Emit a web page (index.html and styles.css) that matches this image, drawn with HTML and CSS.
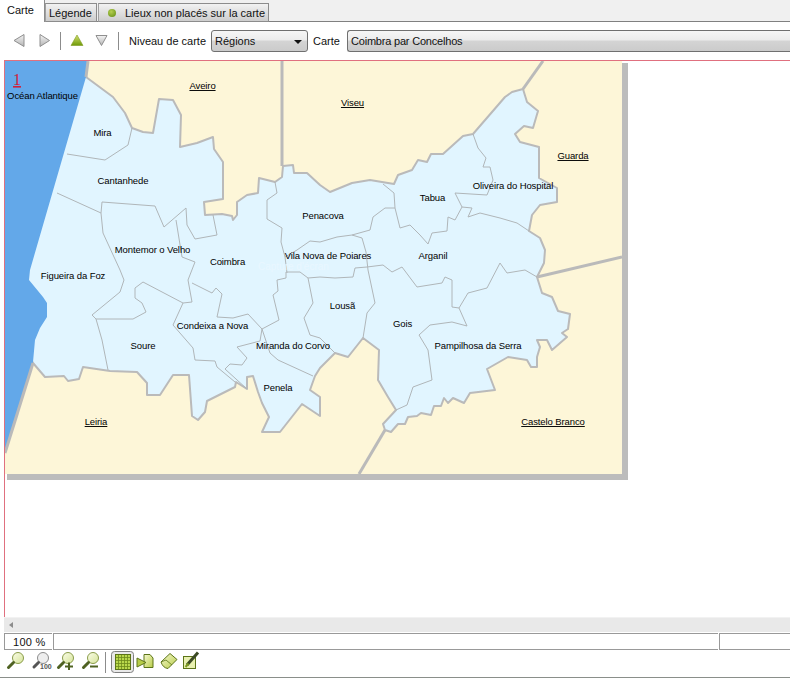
FILE: index.html
```html
<!DOCTYPE html>
<html lang="fr">
<head>
<meta charset="utf-8">
<title>Carte</title>
<link rel="stylesheet" href="styles.css">
</head>
<body>
<div class="app">
  <div class="tabs">
    <div class="tab tab-active">Carte</div>
    <div class="tab tab-legend">Légende</div>
    <div class="tab tab-places"><span class="dot"></span>Lieux non placés sur la carte</div>
  </div>

  <div class="toolbar">
    <svg class="nav-icons" width="106" height="18" viewBox="0 0 106 18">
      <defs>
        <linearGradient id="g-grey" x1="0" y1="0" x2="0" y2="1"><stop offset="0" stop-color="#f4f4f4"/><stop offset="1" stop-color="#b4b4b4"/></linearGradient>
        <linearGradient id="g-green" x1="0" y1="0" x2="0" y2="1"><stop offset="0" stop-color="#d4e070"/><stop offset="1" stop-color="#6f9a08"/></linearGradient>
      </defs>
      <path d="M11 2.500V14.500L1 8.500Z" fill="url(#g-grey)" stroke="#8f8f8f"/>
      <path d="M27 2.500V14.500L36.500 8.500Z" fill="url(#g-grey)" stroke="#8f8f8f"/>
      <path d="M64 3L70 13.500H58Z" fill="url(#g-green)" stroke="#7d9a20" stroke-width=".6"/>
      <path d="M83 3.500H94L88.500 13.500Z" fill="url(#g-grey)" stroke="#8f8f8f"/>
    </svg>
    <span class="sep sep-a"></span>
    <span class="sep sep-b"></span>
    <span class="tool-label">Niveau de carte</span>
    <div class="select select-level"><span>Régions</span><i class="caret"></i></div>
    <span class="tool-label tool-label-map">Carte</span>
    <div class="select select-map"><span>Coimbra par Concelhos</span></div>
  </div>

  <main class="canvas">
    <div class="map">
      <svg width="617" height="413" viewBox="5 61 617 413" role="img" aria-label="Coimbra par Concelhos">
        <rect x="5" y="61" width="617" height="413" fill="#fdf6d8"/>
        <path class="land" d="M86 77L113 97L125 113L132 128L143 132L153 133L159 99L173 100L181 115L180 147L197 143L213 137L214 149L223 162L223 199L204 202L205 215L222 214L232 216L233 220L237 215L237 202L247 195L258 193L259 178L275 182L282 177L283 166L293 165L294 173L307 173L320 185L330 192L352 183L370 180L394 184L398 175L412 170L418 160L427 162L431 154L443 154L463 136L473 134L505 97L512 92L523 89L527 102L538 111L533 128L524 126L515 134L520 142L539 147L539 178L557 188L557 202L540 205L532 215L529 231L540 238L545 250L544 263L537 277L542 293L552 297L558 311L570 314L568 329L562 333L567 337L552 350L547 340L537 340L540 347L537 357L537 367L531 367L527 360L508 357L487 369L495 390L470 393L464 403L453 398L448 403L444 398L441 406L434 406L431 415L421 413L417 416L408 417L405 424L398 424L391 432L385 430L383 424L396 410L388 397L378 380L379 350L363 338L348 357L335 353L320 368L315 376L310 390L320 397L320 416L302 404L280 432L262 432L269 417L262 403L258 392L253 376L247 377L247 389L236 382L235 387L207 401L205 412L198 420L192 416L189 375L173 375L160 395L147 395L147 383L137 372L110 371L83 367L79 379L68 381L64 376L45 377L33 363L20 340L20 270L70 70Z"/>
        <path class="ocean" d="M5 61H88L86 77L30 270L29 280L43 297L47 303L47 317L40 328L35 340L33 362L5 453Z"/>
        <g class="inner">
          <path d="M132 128L128 145L105 160L67 154"/>
          <path d="M57 193L101 213L102 202L155 206L164 227L186 208L187 225L195 239L217 235L213 215"/>
          <path d="M176 220L182 257L195 262L188 280L192 302L183 303"/>
          <path d="M101 213L103 233L120 270L124 280L120 292L92 315L96 319L133 319L146 312L142 303L135 298L135 288L143 282L183 303L173 325L193 348L195 360L215 361L217 367L235 382"/>
          <path d="M96 319L102 340L108 370"/>
          <path d="M192 283L212 293L216 288L222 294L217 317L233 318L248 314L262 329L260 341L237 347L247 358L242 365L230 364L225 369L247 389"/>
          <path d="M262 329L270 353L278 360L313 376"/>
          <path d="M262 329L279 320L273 295L278 291L277 280L286 278L286 272L300 272L308 278L313 303L304 318L310 335L320 338L335 353"/>
          <path d="M275 182L277 193L267 200L267 219L282 228L281 242L285 257L287 273"/>
          <path d="M285 257L297 250L310 241L320 242L337 237L352 235L362 238L366 252L368 270L375 303L367 313L363 338"/>
          <path d="M352 235L370 230L373 217L385 208L395 208L394 193L383 184"/>
          <path d="M395 208L400 228L410 225L420 235L428 244L432 233L447 231L448 217L455 220L462 207L455 193L487 195L493 180L490 167L483 167L486 158L478 148L473 134"/>
          <path d="M462 207L472 208L468 217L480 213L500 218L517 223L529 231"/>
          <path d="M367 267L383 265L392 272L402 267L417 287L442 283L445 277L452 280L452 307L459 308L467 326L452 322L430 325L419 335L428 350L432 380L413 387L407 405L396 410"/>
          <path d="M459 308L468 293L487 288L500 263L507 273L525 270L537 277"/>
          <path d="M308 278L320 277L335 278L353 277L355 268L367 267"/>
        </g>
        <g class="border">
          <path d="M282 61V166"/>
          <path d="M543 61L523 89"/>
          <path d="M537 277L622 257"/>
          <path d="M385 430L359 474"/>
          <path d="M33 363L5 453"/>
          <path d="M88 61L86 77"/>
        </g>
        <text class="ref" x="13" y="85">1</text>
        <text class="watermark" x="258" y="270">Capture d'écran</text>
        <g class="names">
          <text x="42.500" y="99">Océan Atlantique</text>
          <text x="102.500" y="136">Mira</text>
          <text x="123" y="184">Cantanhede</text>
          <text x="323" y="219">Penacova</text>
          <text x="432.500" y="201">Tabua</text>
          <text x="513" y="189">Oliveira do Hospital</text>
          <text x="152.500" y="253">Montemor o Velho</text>
          <text x="227.500" y="265">Coimbra</text>
          <text x="328" y="259">Vila Nova de Poiares</text>
          <text x="433" y="259">Arganil</text>
          <text x="73" y="279">Figueira da Foz</text>
          <text x="212.500" y="329">Condeixa a Nova</text>
          <text x="143" y="349">Soure</text>
          <text x="293" y="349">Miranda do Corvo</text>
          <text x="342.500" y="309">Lousã</text>
          <text x="402.500" y="327">Gois</text>
          <text x="478" y="349">Pampilhosa da Serra</text>
          <text x="278" y="391">Penela</text>
        </g>
        <g class="names neighbours">
          <text x="202.500" y="89">Aveiro</text>
          <text x="352.500" y="106">Viseu</text>
          <text x="573" y="159">Guarda</text>
          <text x="96" y="425">Leiria</text>
          <text x="553" y="425">Castelo Branco</text>
        </g>
      </svg>
    </div>
  </main>

  <div class="scrollbar"><i class="scroll-arrow"></i></div>

  <div class="status">
    <div class="cell cell-zoom">100 %</div>
    <div class="cell cell-wide"></div>
    <div class="cell cell-end"></div>
  </div>

  <div class="bottombar">
    <svg class="bottom-icons" width="200" height="27" viewBox="0 650 200 27">
      <defs>
        <linearGradient id="g-lens" x1="0" y1="0" x2="1" y2="1"><stop offset="0" stop-color="#fbfde8"/><stop offset="1" stop-color="#d6e49a"/></linearGradient>
        <linearGradient id="g-leaf" x1="0" y1="0" x2="1" y2="1"><stop offset="0" stop-color="#f6f9d0"/><stop offset="1" stop-color="#b8cc48"/></linearGradient>
      </defs>
      <g class="lens">
        <circle cx="18" cy="658" r="5.500"/><path d="M13.500 662.500L8.500 667.500"/>
      </g>
      <g class="lens lens-grey">
        <circle cx="43" cy="658" r="5.500"/><path d="M38.500 662.500L34 667"/>
      </g>
      <text class="tiny" x="40" y="669">100</text>
      <g class="lens">
        <circle cx="68" cy="658" r="5.500"/><path d="M63.500 662.500L58.500 667.500"/>
        <path class="sign" d="M65 666.500H73M69 662.500V670"/>
      </g>
      <g class="lens">
        <circle cx="93" cy="658" r="5.500"/><path d="M88.500 662.500L83.500 667.500"/>
        <path class="sign" d="M90 666.500H98"/>
      </g>
      <path d="M105.500 652V673" stroke="#8c8c8c"/>
      <rect x="111.500" y="651.500" width="22" height="21" rx="3" fill="#e9e9e9" stroke="#808080"/>
      <rect x="115.500" y="654.500" width="15" height="15" fill="#b9d84c" stroke="#5c7418"/>
      <path d="M118.500 655V669M121.500 655V669M124.500 655V669M127.500 655V669M116 657.500H130M116 660.500H130M116 663.500H130M116 666.500H130" stroke="#6d8a1c" stroke-width=".8"/>
      <path d="M144 654.500H150L153 658V667.500H144Z" fill="url(#g-leaf)" stroke="#5c7418"/>
      <path d="M137 658L146 662.500L137 667Z" fill="#b7cc48" stroke="#5c7418"/>
      <path d="M161 662L170 653.500L177 659.500L168 668.500Q163 668 161 662Z" fill="url(#g-leaf)" stroke="#5c7418"/>
      <path d="M161 662L166 660L172 665" fill="none" stroke="#5c7418" stroke-width=".8"/>
      <rect x="183.500" y="656.500" width="12" height="12" fill="#e8f0b0" stroke="#5c7418"/>
      <path d="M187 665L198 652.500" stroke="#3c4a24" stroke-width="3"/>
      <path d="M185.500 667L188.500 663.500" stroke="#7d9a20" stroke-width="2"/>
    </svg>
  </div>
</div>
</body>
</html>
```

FILE: styles.css
```css
* {
  box-sizing: border-box;
}

html,
body {
  margin: 0;
  height: 100%;
  background: #fff;
  overflow: hidden;
}

body {
  font-family: "Liberation Sans", Arial, sans-serif;
  font-size: 11px;
  color: #111;
}

.app {
  display: flex;
  flex-direction: column;
  width: 790px;
  height: 678px;
}

/* tabs */
.tabs {
  flex: none;
  display: flex;
  align-items: flex-end;
  height: 22px;
  background: #f0f0f0;
  border-bottom: 1px solid #808080;
}

.tab {
  display: flex;
  align-items: center;
  height: 19px;
  margin-bottom: -1px;
  border: 1px solid #8c8c8c;
  border-left-color: #a0a0a0;
  background: linear-gradient(#f2f2f2, #cdcdcd);
  white-space: nowrap;
}

.tab-active {
  width: 45px;
  height: 22px;
  padding-left: 7px;
  padding-bottom: 2px;
  border-width: 0 1px 0 0;
  background: #fff;
}

.tab-legend {
  width: 52px;
  padding-left: 3px;
}

.tab-places {
  width: 171px;
  margin-left: 1px;
  padding-left: 9px;
}

.dot {
  flex: none;
  width: 8px;
  height: 8px;
  margin-right: 9px;
  border-radius: 50%;
  background: radial-gradient(circle at 40% 35%, #b5cf50, #5f8a10);
}

/* toolbar */
.toolbar {
  flex: none;
  position: relative;
  display: flex;
  align-items: center;
  height: 38px;
  padding-left: 13px;
}

.nav-icons {
  flex: none;
  margin-right: 10px;
}

.sep {
  position: absolute;
  top: 10px;
  width: 1px;
  height: 18px;
  background: #8c8c8c;
}

.sep-a {
  left: 60px;
}

.sep-b {
  left: 118px;
}

.tool-label {
  flex: none;
  width: 82px;
}

.tool-label-map {
  width: 34px;
  margin-left: 5px;
}

.select {
  flex: none;
  position: relative;
  display: flex;
  align-items: center;
  height: 22px;
  padding-left: 3px;
  border: 1px solid #707070;
  border-radius: 3px;
  background: linear-gradient(#f6f6f6 0, #ececec 45%, #d4d4d4 50%, #cbcbcb 100%);
}

.select-level {
  width: 97px;
}

.select-map {
  width: 470px;
  border-right: 0;
  letter-spacing: -0.2px;
}

.caret {
  position: absolute;
  right: 5px;
  top: 9px;
  border: 4px solid transparent;
  border-top-color: #111;
  border-bottom: 0;
}

/* map */
.canvas {
  flex: 1;
  margin-left: 4px;
  border-top: 1px solid #e0707f;
  border-left: 1px solid #e0707f;
}

.map {
  width: 617px;
  height: 413px;
  box-shadow: 4px 4px 0 2px #bcbcbc;
}

.map svg {
  display: block;
}

.ocean {
  fill: #63a8e9;
}

.land {
  fill: #e1f5ff;
  stroke: #bababa;
  stroke-width: 2;
  stroke-linejoin: round;
}

.inner path {
  fill: none;
  stroke: #b0b6b9;
  stroke-width: 1;
}

.border path {
  fill: none;
  stroke: #bababa;
  stroke-width: 3;
}

.names text {
  font-size: 9.500px;
  letter-spacing: -0.1px;
  text-anchor: middle;
  fill: #000;
}

.neighbours text {
  text-decoration: underline;
}

.ref {
  font-family: "Liberation Serif", serif;
  font-size: 16px;
  fill: #d0203c;
  text-decoration: underline;
}

.watermark {
  font-size: 10px;
  fill: #e9f7ff;
}

/* scrollbar and status */
.scrollbar {
  flex: none;
  display: flex;
  align-items: center;
  height: 15px;
  margin-left: 4px;
  padding-left: 5px;
  background: #e9e9e9;
  border-top: 1px solid #f2f2f2;
}

.scroll-arrow {
  border: 3.500px solid transparent;
  border-right: 4px solid #8c8c8c;
  border-left: 0;
}

.status {
  flex: none;
  display: flex;
  gap: 1px;
  height: 17px;
  margin-top: 1px;
  padding-left: 4px;
}

.cell {
  display: flex;
  align-items: center;
  border: 1px solid #999;
  border-right: 0;
}

.cell-zoom {
  width: 48px;
  padding-left: 8px;
  letter-spacing: 0.3px;
}

.cell-wide {
  width: 665px;
}

.cell-end {
  flex: 1;
}

.bottombar {
  flex: none;
  height: 28px;
  border-bottom: 1px solid #8a8f8a;
}

.bottom-icons {
  display: block;
}

.lens circle {
  fill: url(#g-lens);
  stroke: #8a9c4a;
}

.lens path {
  fill: none;
  stroke: #4f6222;
  stroke-width: 3;
  stroke-linecap: round;
}

.lens-grey circle {
  fill: #eeeeee;
  stroke: #8c8c8c;
}

.lens-grey path {
  stroke: #555;
}

.lens .sign {
  stroke-width: 2;
  stroke-linecap: butt;
}

.tiny {
  font-size: 7px;
  font-weight: bold;
  fill: #555;
}
```
